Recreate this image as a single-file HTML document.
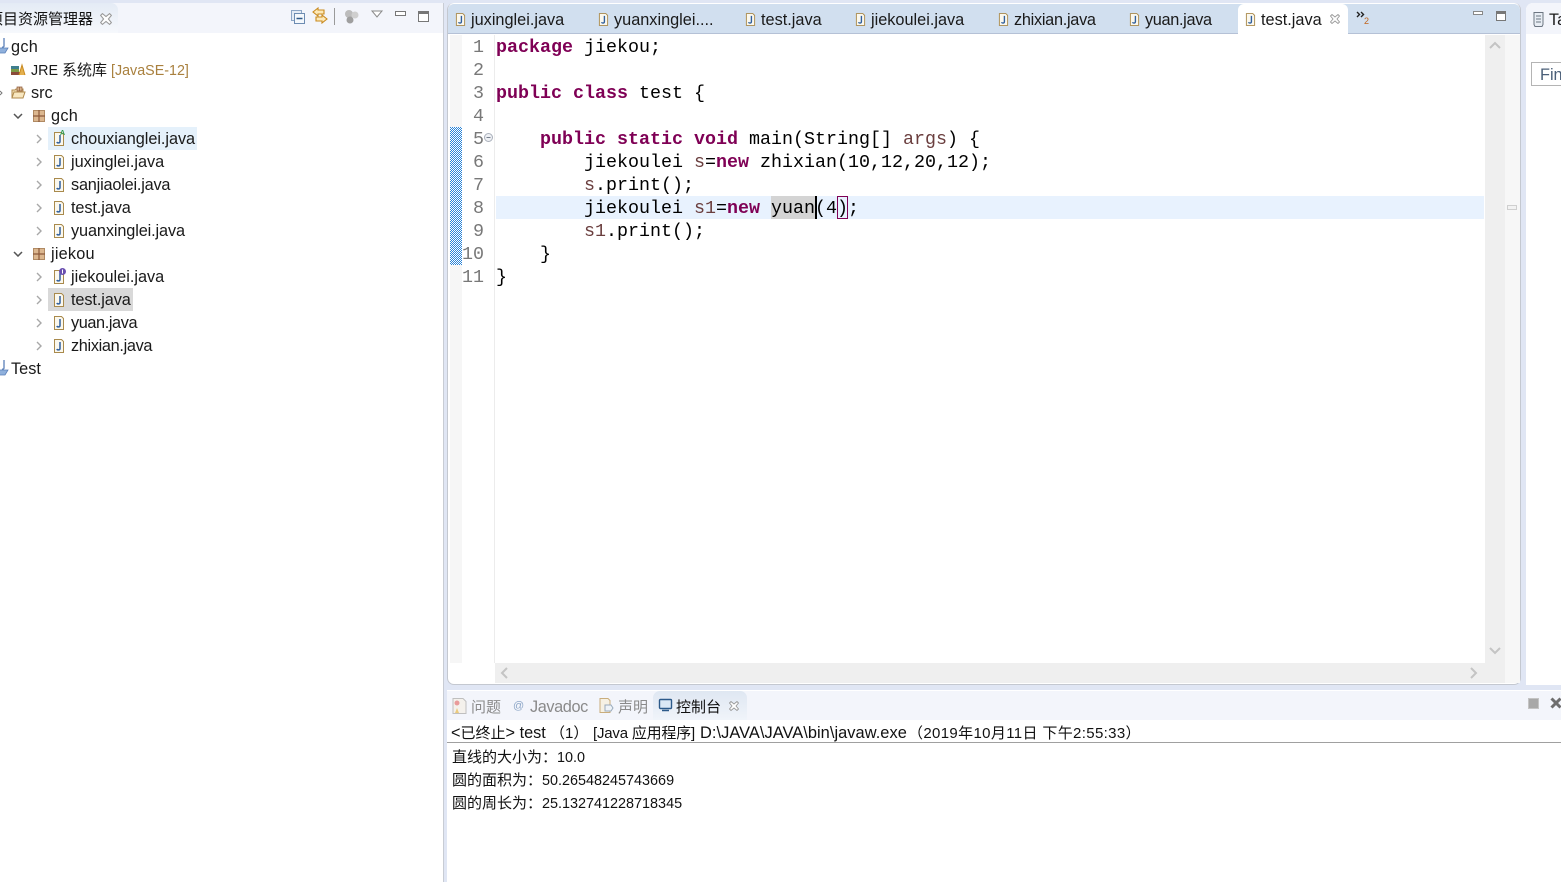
<!DOCTYPE html>
<html><head><meta charset="utf-8"><style>
html,body{margin:0;padding:0;background:#fff}
#r{position:relative;width:1561px;height:882px;overflow:hidden;background:#e0e6f4;font-family:"Liberation Sans","Noto Sans CJK SC",sans-serif;font-size:16.3px;color:#1a1a1a}
#r div,#r span.a,#r svg.a{position:absolute}
.t{position:absolute;white-space:pre;line-height:23px;height:23px;margin-top:1px}
.c{position:absolute;white-space:pre;line-height:23px;height:23px;left:496px;margin-top:1px;font-family:"Liberation Mono",monospace;font-size:18.33px;color:#000}
.c b{color:#7f0055;font-weight:bold}
.c i{font-style:normal;color:#6a3e3e}
.n{position:absolute;white-space:pre;line-height:23px;width:36px;left:448px;margin-top:1px;text-align:right;font-family:"Liberation Mono",monospace;font-size:18.33px;color:#787878}
.g{color:#a9803e}
svg{overflow:visible}
.k{font-size:15px}
.o{font-size:14.4px;color:#111;margin-top:1px}
.dim{color:#8a8a8a}
</style></head><body><div id="r">
<svg width="0" height="0" style="position:absolute"><defs>
<symbol id="j" viewBox="0 0 12 14"><path d="M1.500.5h7l2 2v11h-9z" fill="#fbf8ee" stroke="#a98a4c"/><path d="M7 3v6.500c0 1.800-2.600 1.800-3.200.5" fill="none" stroke="#2f5f9e" stroke-width="1.500"/></symbol>
<symbol id="pk" viewBox="0 0 12 12"><rect x=".5" y=".5" width="11" height="11" fill="#dcb78f" stroke="#b08a63"/><path d="M6 0v12M0 6h12" stroke="#8d5a3a" stroke-width="1.200"/></symbol>
<symbol id="ar" viewBox="0 0 6 10"><path d="M1 1l4 4-4 4" fill="none" stroke="#a8a8a8" stroke-width="1.400"/></symbol>
<symbol id="dn" viewBox="0 0 10 6"><path d="M1 1l4 4 4-4" fill="none" stroke="#555" stroke-width="1.500"/></symbol>
<symbol id="x" viewBox="0 0 10 10"><path d="M.5 2L2 .5l3 2.500L8 .5 9.500 2 7 5l2.500 3L8 9.500 5 7 2 9.500.5 8 3 5z" fill="#fff" stroke="#9a9a9a" stroke-width=".9"/></symbol>
<symbol id="prj" viewBox="0 0 10 16"><path d="M4 0v8c0 1-1 1.500-2 1" fill="none" stroke="#5a7fb8" stroke-width="1.300"/><path d="M-4 10h12l-3 5h-9z" fill="#8fb0dc" stroke="#5a7fb8" stroke-width=".8"/></symbol>
<pattern id="dith" width="2" height="2" patternUnits="userSpaceOnUse"><rect width="2" height="2" fill="#fff"/><rect width="1" height="1" fill="#2a84d8"/><rect x="1" y="1" width="1" height="1" fill="#2a84d8"/></pattern>
</defs></svg>

<!-- left panel -->
<div style="left:0;top:3px;width:443px;height:879px;background:#fff;border-right:1px solid #c8ccd4"></div>
<div style="left:0;top:3px;width:443px;height:30px;background:#f3f5fb"></div>
<div style="left:0;top:3px;width:118px;height:30px;background:linear-gradient(#e4ebf5,#f6f8fc);border-radius:0 7px 0 0"></div>
<span class="t k" style="left:-12px;top:7px;color:#111">项目资源管理器</span>
<svg class="a" style="left:100px;top:13px" width="12" height="12"><use href="#x" width="12" height="12"/></svg>

<!-- left toolbar -->
<svg class="a" style="left:291px;top:10px" width="15" height="15"><rect x=".5" y=".5" width="10" height="10" fill="#e4ecf6" stroke="#8ca6c6"/><rect x="3.500" y="3.500" width="10" height="10" fill="#f4f8fc" stroke="#6d8cb2"/><path d="M5.500 8.500h6" stroke="#2f5a8a" stroke-width="1.500"/></svg>
<svg class="a" style="left:312px;top:7px" width="17" height="18"><path d="M6 1L1 5l5 4V7h6V3H6zM10 8l5 4-5 4v-2H4v-4h6z" fill="#fde9b8" stroke="#c98a1e" stroke-width="1.100"/></svg>
<div style="left:334px;top:8px;width:1px;height:17px;background:#9a9a9a"></div>
<svg class="a" style="left:344px;top:9px" width="16" height="16"><circle cx="5" cy="5" r="4" fill="#bcbcbc"/><circle cx="11" cy="6" r="3.500" fill="#cfcfcf"/><circle cx="6" cy="11" r="3.500" fill="#9f9f9f"/></svg>
<svg class="a" style="left:371px;top:10px" width="12" height="8"><path d="M1 1h10L6 7z" fill="#fff" stroke="#8a8a8a"/></svg>
<div style="left:395px;top:11px;width:9px;height:3px;border:1px solid #777;background:#fff"></div>
<div style="left:418px;top:11px;width:9px;height:7px;border:1px solid #777;border-top:3px solid #777;background:#fff"></div>

<!-- tree -->
<svg class="a" style="left:0;top:38px" width="10" height="16"><use href="#prj" width="10" height="16"/></svg>
<span class="t" style="left:11px;top:35px;letter-spacing:.3px">gch</span>
<svg class="a" style="left:10px;top:63px" width="16" height="14"><rect x="1" y="3" width="8" height="3" fill="#3f7f8f"/><rect x="1" y="6" width="8" height="3" fill="#7c9a46"/><rect x="1" y="9" width="9" height="3" fill="#8a4a3a"/><path d="M9 12l3-10 3 10" fill="#e4b04e" stroke="#c98a1e"/></svg>
<span class="t" style="left:31px;top:58px;font-size:14.3px">JRE <span style="font-size:15px">系统库</span> <span class="g">[JavaSE-12]</span></span>
<svg class="a" style="left:0;top:90px" width="4" height="6"><path d="M0 1l2 2-2 2" fill="none" stroke="#777"/></svg>
<svg class="a" style="left:11px;top:86px" width="15" height="13"><path d="M1 12V4h3l1-1h7v3" fill="#f5e2b8" stroke="#b08a4c"/><path d="M1 12l2-6h11l-2 6z" fill="#f8e7c0" stroke="#b08a4c"/><path d="M6 1h5v4H6zM8.500 1v4" fill="#d8b48c" stroke="#8d5a3a" stroke-width=".7"/></svg>
<span class="t" style="left:31px;top:81px">src</span>

<svg class="a" style="left:13px;top:113px" width="10" height="6"><use href="#dn" width="10" height="6"/></svg>
<svg class="a" style="left:33px;top:110px" width="12" height="12"><use href="#pk" width="12" height="12"/></svg>
<span class="t" style="left:51px;top:104px;letter-spacing:.3px">gch</span>

<div style="left:48px;top:127px;width:149px;height:23px;background:#e5f1fb"></div>
<svg class="a" style="left:36px;top:134px" width="6" height="10"><use href="#ar" width="6" height="10"/></svg>
<svg class="a" style="left:53px;top:132px" width="12" height="14"><use href="#j" width="12" height="14"/></svg>
<span class="a" style="left:60px;top:130px;font-size:7px;line-height:7px;color:#2e9a4e;font-weight:bold">A</span>
<span class="t" style="left:71px;top:127px;letter-spacing:-.05px">chouxianglei.java</span>

<svg class="a" style="left:36px;top:157px" width="6" height="10"><use href="#ar" width="6" height="10"/></svg>
<svg class="a" style="left:53px;top:155px" width="12" height="14"><use href="#j" width="12" height="14"/></svg>
<span class="t" style="left:71px;top:150px">juxinglei.java</span>

<svg class="a" style="left:36px;top:180px" width="6" height="10"><use href="#ar" width="6" height="10"/></svg>
<svg class="a" style="left:53px;top:178px" width="12" height="14"><use href="#j" width="12" height="14"/></svg>
<span class="t" style="left:71px;top:173px;letter-spacing:-.2px">sanjiaolei.java</span>

<svg class="a" style="left:36px;top:203px" width="6" height="10"><use href="#ar" width="6" height="10"/></svg>
<svg class="a" style="left:53px;top:201px" width="12" height="14"><use href="#j" width="12" height="14"/></svg>
<span class="t" style="left:71px;top:196px;letter-spacing:-.1px">test.java</span>

<svg class="a" style="left:36px;top:226px" width="6" height="10"><use href="#ar" width="6" height="10"/></svg>
<svg class="a" style="left:53px;top:224px" width="12" height="14"><use href="#j" width="12" height="14"/></svg>
<span class="t" style="left:71px;top:219px;letter-spacing:-.12px">yuanxinglei.java</span>

<svg class="a" style="left:13px;top:251px" width="10" height="6"><use href="#dn" width="10" height="6"/></svg>
<svg class="a" style="left:33px;top:248px" width="12" height="12"><use href="#pk" width="12" height="12"/></svg>
<span class="t" style="left:51px;top:242px;letter-spacing:.2px">jiekou</span>

<svg class="a" style="left:36px;top:272px" width="6" height="10"><use href="#ar" width="6" height="10"/></svg>
<svg class="a" style="left:53px;top:270px" width="12" height="14"><use href="#j" width="12" height="14"/></svg>
<svg class="a" style="left:59px;top:268px" width="7" height="7"><circle cx="3.500" cy="3.500" r="3.500" fill="#6a4fb0"/><path d="M3.500 1.500v4" stroke="#fff"/></svg>
<span class="t" style="left:71px;top:265px">jiekoulei.java</span>

<div style="left:48px;top:288px;width:85px;height:23px;background:#d9d9d9"></div>
<svg class="a" style="left:36px;top:295px" width="6" height="10"><use href="#ar" width="6" height="10"/></svg>
<svg class="a" style="left:53px;top:293px" width="12" height="14"><use href="#j" width="12" height="14"/></svg>
<span class="t" style="left:71px;top:288px;letter-spacing:-.1px">test.java</span>

<svg class="a" style="left:36px;top:318px" width="6" height="10"><use href="#ar" width="6" height="10"/></svg>
<svg class="a" style="left:53px;top:316px" width="12" height="14"><use href="#j" width="12" height="14"/></svg>
<span class="t" style="left:71px;top:311px;letter-spacing:-.4px">yuan.java</span>

<svg class="a" style="left:36px;top:341px" width="6" height="10"><use href="#ar" width="6" height="10"/></svg>
<svg class="a" style="left:53px;top:339px" width="12" height="14"><use href="#j" width="12" height="14"/></svg>
<span class="t" style="left:71px;top:334px;letter-spacing:-.33px">zhixian.java</span>

<svg class="a" style="left:0;top:360px" width="10" height="16"><use href="#prj" width="10" height="16"/></svg>
<span class="t" style="left:11px;top:357px">Test</span>

<!-- editor panel -->
<div style="left:447px;top:3px;width:1074px;height:682px;background:#fff;border:1px solid #c4c8d0;border-top:none;border-radius:7px;box-sizing:border-box"></div>
<div style="left:448px;top:4px;width:1072px;height:29px;background:#d1dfef;border-bottom:1px solid #b5c1d6;border-radius:6px 6px 0 0"></div>
<div style="left:1238px;top:4px;width:110px;height:30px;background:#fff;border-radius:6px 6px 0 0"></div>

<svg class="a" style="left:455px;top:13px" width="11" height="13"><use href="#j" width="11" height="13"/></svg>
<span class="t" style="left:471px;top:8px">juxinglei.java</span>
<svg class="a" style="left:598px;top:13px" width="11" height="13"><use href="#j" width="11" height="13"/></svg>
<span class="t" style="left:614px;top:8px">yuanxinglei....</span>
<svg class="a" style="left:745px;top:13px" width="11" height="13"><use href="#j" width="11" height="13"/></svg>
<span class="t" style="left:761px;top:8px">test.java</span>
<svg class="a" style="left:855px;top:13px" width="11" height="13"><use href="#j" width="11" height="13"/></svg>
<span class="t" style="left:871px;top:8px">jiekoulei.java</span>
<svg class="a" style="left:998px;top:13px" width="11" height="13"><use href="#j" width="11" height="13"/></svg>
<span class="t" style="left:1014px;top:8px;letter-spacing:-.28px">zhixian.java</span>
<svg class="a" style="left:1129px;top:13px" width="11" height="13"><use href="#j" width="11" height="13"/></svg>
<span class="t" style="left:1145px;top:8px;letter-spacing:-.33px">yuan.java</span>
<svg class="a" style="left:1245px;top:13px" width="11" height="13"><use href="#j" width="11" height="13"/></svg>
<span class="t" style="left:1261px;top:8px">test.java</span>
<svg class="a" style="left:1330px;top:14px" width="10" height="10"><use href="#x" width="10" height="10"/></svg>
<svg class="a" style="left:1356px;top:11px" width="10" height="7"><path d="M1 1l2.500 2.500L1 6M5 1l2.500 2.500L5 6" fill="none" stroke="#222" stroke-width="1.400"/></svg>
<span class="a" style="left:1364px;top:16px;font-size:9px;line-height:10px;color:#c0641e">2</span>
<div style="left:1473px;top:11px;width:8px;height:2px;border:1px solid #888;background:#fff"></div>
<div style="left:1496px;top:11px;width:8px;height:6px;border:1px solid #777;border-top:3px solid #777;background:#fff"></div>

<!-- editor gutter -->
<div style="left:450px;top:35px;width:12px;height:628px;background:#f6f6f6"></div>
<svg class="a" style="left:450px;top:127px" width="12" height="138" shape-rendering="crispEdges"><rect width="12" height="138" fill="url(#dith)"/></svg>
<div style="left:494px;top:35px;width:1px;height:628px;background:#ececec"></div>
<div style="left:1485px;top:35px;width:20px;height:628px;background:#efefef"></div>
<div style="left:1505px;top:35px;width:15px;height:648px;background:#f7f7f7"></div>
<div style="left:495px;top:663px;width:1010px;height:20px;background:#efefef"></div>
<div style="left:1507px;top:205px;width:8px;height:3px;border:1px solid #cfcfcf;background:#f2f2f2"></div>
<svg class="a" style="left:1489px;top:41px" width="12" height="8"><path d="M1 7l5-5 5 5" fill="none" stroke="#c4c4c4" stroke-width="2"/></svg>
<svg class="a" style="left:1489px;top:647px" width="12" height="8"><path d="M1 1l5 5 5-5" fill="none" stroke="#c4c4c4" stroke-width="2"/></svg>
<svg class="a" style="left:500px;top:667px" width="8" height="12"><path d="M7 1L2 6l5 5" fill="none" stroke="#c4c4c4" stroke-width="2"/></svg>
<svg class="a" style="left:1470px;top:667px" width="8" height="12"><path d="M1 1l5 5-5 5" fill="none" stroke="#c4c4c4" stroke-width="2"/></svg>

<!-- current line -->
<div style="left:496px;top:196px;width:988px;height:23px;background:#e8f2fe"></div>
<div style="left:771px;top:196px;width:44px;height:23px;background:#d4d4d4"></div>
<div style="left:815px;top:196px;width:2px;height:23px;background:#000"></div>
<div style="left:837px;top:196px;width:11px;height:23px;box-sizing:border-box;border:1px solid #7f0055"></div>

<!-- line numbers -->
<span class="n" style="top:35px">1</span>
<span class="n" style="top:58px">2</span>
<span class="n" style="top:81px">3</span>
<span class="n" style="top:104px">4</span>
<span class="n" style="top:127px">5</span>
<span class="n" style="top:150px">6</span>
<span class="n" style="top:173px">7</span>
<span class="n" style="top:196px">8</span>
<span class="n" style="top:219px">9</span>
<span class="n" style="top:242px">10</span>
<span class="n" style="top:265px">11</span>
<svg class="a" style="left:484px;top:133px" width="9" height="9"><circle cx="4.500" cy="4.500" r="4" fill="#eef0f4" stroke="#aab0bb"/><path d="M2.500 4.500h4" stroke="#77808e"/></svg>

<!-- code -->
<span class="c" style="top:35px"><b>package</b> jiekou;</span>
<span class="c" style="top:81px"><b>public</b> <b>class</b> test {</span>
<span class="c" style="top:127px">    <b>public</b> <b>static</b> <b>void</b> main(String[] <i>args</i>) {</span>
<span class="c" style="top:150px">        jiekoulei <i>s</i>=<b>new</b> zhixian(10,12,20,12);</span>
<span class="c" style="top:173px">        <i>s</i>.print();</span>
<span class="c" style="top:196px">        jiekoulei <i>s1</i>=<b>new</b> yuan(4);</span>
<span class="c" style="top:219px">        <i>s1</i>.print();</span>
<span class="c" style="top:242px">    }</span>
<span class="c" style="top:265px">}</span>

<!-- right panel -->
<div style="left:1526px;top:3px;width:35px;height:682px;background:#fff;border-radius:7px 0 0 0"></div>
<div style="left:1526px;top:3px;width:35px;height:31px;background:#f3f5fb;border-radius:7px 0 0 0"></div>
<svg class="a" style="left:1533px;top:12px" width="11" height="15"><path d="M1 .5h9v12l-1 2H2l-1-2z" fill="#e8edf4" stroke="#6d7682"/><path d="M3 4h5M3 7h5M3 10h5" stroke="#6d7682"/></svg>
<span class="t" style="left:1549px;top:8px">Ta</span>
<div style="left:1531px;top:62px;width:40px;height:24px;box-sizing:border-box;border:1px solid #b4b4b4;background:#fff"></div>
<span class="t" style="left:1540px;top:63px;color:#4b5f78">Fin</span>

<!-- bottom panel -->
<div style="left:447px;top:690px;width:1114px;height:192px;background:#fff"></div>
<div style="left:447px;top:691px;width:1114px;height:29px;background:#f3f5fb"></div>
<div style="left:653px;top:691px;width:94px;height:29px;background:linear-gradient(#dfe7f2,#f0f4fa);border-radius:7px 7px 0 0"></div>
<svg class="a" style="left:452px;top:698px" width="15" height="16"><path d="M1 .5h10l3 3v12H1z" fill="#f4f1ec" stroke="#bfbfbf"/><circle cx="5" cy="5" r="2.500" fill="#e99b9b"/><path d="M3 15l2-5 2 5z" fill="#eccb7e"/></svg>
<span class="t k dim" style="left:471px;top:695px">问题</span>
<span class="a" style="left:513px;top:699px;font-size:11px;line-height:14px;color:#8fa8c8">@</span>
<span class="t dim" style="left:530px;top:695px;letter-spacing:-.4px">Javadoc</span>
<svg class="a" style="left:599px;top:698px" width="15" height="16"><path d="M1 .5h8l2 2v12H1z" fill="#f6f1e4" stroke="#c9ad7c"/><path d="M6 7h6l2 3-2 3H6z" fill="#eef3f8" stroke="#9ab"/></svg>
<span class="t k dim" style="left:618px;top:695px">声明</span>
<svg class="a" style="left:659px;top:699px" width="14" height="13"><rect x=".5" y=".5" width="12" height="9" rx="1" fill="#dce8f5" stroke="#2d5a8a" stroke-width="1.400"/><path d="M3 11.500h7" stroke="#2d5a8a" stroke-width="1.500"/></svg>
<span class="t k" style="left:676px;top:695px;color:#111">控制台</span>
<svg class="a" style="left:729px;top:701px" width="10" height="10"><use href="#x" width="10" height="10"/></svg>
<div style="left:1528px;top:698px;width:9px;height:9px;background:#a8a8a8;border:1px solid #c4c4c4"></div>
<svg class="a" style="left:1550px;top:697px" width="12" height="12"><path d="M1.500 1.500l9 9M10.500 1.500l-9 9" stroke="#6e6e6e" stroke-width="3"/></svg>

<!-- console -->
<span class="t o" style="left:451px;top:721px;font-size:16.3px">&lt;<span class="k">已终止</span>&gt; test</span>
<span class="t o" style="left:550px;top:721px;font-size:15px">（1）</span>
<span class="t o" style="left:593px;top:721px;font-size:15px;letter-spacing:-.2px">[Java 应用程序]</span>
<span class="t o" style="left:700px;top:721px;font-size:16.4px;letter-spacing:.05px">D:\JAVA\JAVA\bin\javaw.exe</span>
<span class="t o" style="left:908px;top:721px;font-size:15px;letter-spacing:.35px">（2019年10月11日 下午2:55:33）</span>
<div style="left:447px;top:742px;width:1114px;height:1px;background:#a0a0a0"></div>
<span class="t o" style="left:452px;top:745px"><span class="k">直线的大小为：</span>10.0</span>
<span class="t o" style="left:452px;top:768px"><span class="k">圆的面积为：</span>50.26548245743669</span>
<span class="t o" style="left:452px;top:791px"><span class="k">圆的周长为：</span>25.132741228718345</span>
</div></body></html>
